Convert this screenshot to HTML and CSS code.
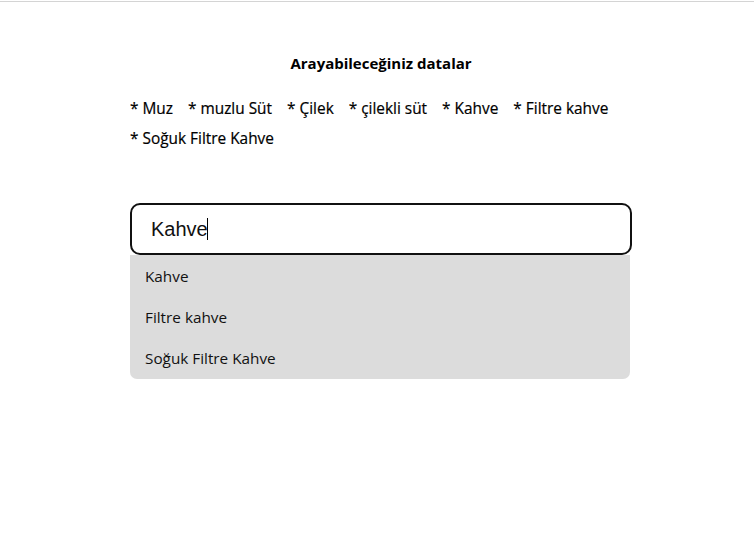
FILE: index.html
```html
<!DOCTYPE html>
<html lang="tr">
<head>
<meta charset="utf-8">
<title>Arama</title>
<link rel="stylesheet" href="styles.css">
</head>
<body>
<div class="topline"></div>
<main class="wrap">
  <h1 class="title">Arayabileceğiniz datalar</h1>
  <ul class="data-list">
    <li>* Muz</li>
    <li>* muzlu Süt</li>
    <li>* Çilek</li>
    <li>* çilekli süt</li>
    <li>* Kahve</li>
    <li>* Filtre kahve</li>
    <li>* Soğuk Filtre Kahve</li>
  </ul>
  <div class="search">
    <div class="field">
      <input class="search-input" type="text" value="Kahve">
      <span class="caret"></span>
    </div>
    <ul class="results">
      <li>Kahve</li>
      <li>Filtre kahve</li>
      <li>Soğuk Filtre Kahve</li>
    </ul>
  </div>
</main>
</body>
</html>
```
FILE: styles.css
```css
html, body {
  margin: 0;
  padding: 0;
  background: #fff;
}
body {
  font-family: "Open Sans", "Noto Sans", sans-serif;
  color: #000;
}
.topline {
  height: 1px;
  margin-top: 1px;
  background: #d4d4d4;
}
.wrap {
  width: 502px;
  margin-left: 130px;
  padding-top: 51px;
}
.title {
  margin: 0;
  text-align: center;
  font-size: 15px;
  font-weight: 700;
  line-height: 20px;
}
.data-list {
  list-style: none;
  margin: 21px 0 0;
  padding: 0;
  display: flex;
  flex-wrap: wrap;
  column-gap: 15px;
  font-size: 15.4px;
  line-height: 30px;
  -webkit-text-stroke: 0.2px #000;
}
.search {
  margin-top: 49px;
}
.field {
  position: relative;
}
.search-input {
  display: block;
  box-sizing: border-box;
  width: 502px;
  height: 52px;
  margin: 0;
  padding: 0 19px;
  border: 2px solid #111;
  border-radius: 10px;
  font-family: "Liberation Sans", Arial, sans-serif;
  font-size: 20px;
  color: #111;
  outline: none;
  background: #fff;
}
.caret {
  position: absolute;
  left: 77px;
  top: 15px;
  width: 1px;
  height: 22px;
  background: #000;
}
.results {
  list-style: none;
  margin: 0;
  padding: 1px 0 0;
  width: 500px;
  background: #dcdcdc;
  border-radius: 0 0 7px 7px;
  font-size: 15.3px;
  color: #111;
}
.results li {
  height: 41px;
  line-height: 41px;
  padding-left: 15px;
}
```
